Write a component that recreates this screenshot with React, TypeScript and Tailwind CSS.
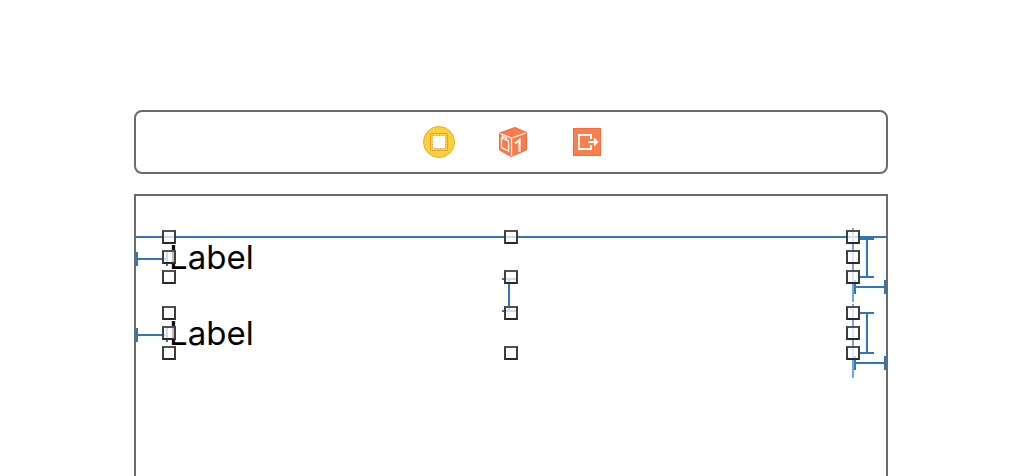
import React from 'react';

interface SpacingProps {
  className?: string;
}

// Horizontal measure: a line with a cap at both ends
function HorizontalSpacing({ className = '' }: SpacingProps) {
  return (
    <div
      className={`absolute flex h-3.5 w-8 items-center border-x-2 border-[#2e78b7] ${className}`}
    >
      <div className="h-0.5 w-full bg-[#2e78b7]" />
    </div>
  );
}

// Vertical measure
function VerticalSpacing({ className = '' }: SpacingProps) {
  return (
    <div
      className={`absolute flex w-3.5 justify-center border-y-2 border-[#2e78b7] ${className}`}
    >
      <div className="h-full w-0.5 bg-[#2e78b7]" />
    </div>
  );
}

const handlePositions = [
  'left-0 top-0',
  'left-0 top-1/2',
  'left-0 top-full',
  'left-1/2 top-0',
  'left-1/2 top-full',
  'left-full top-0',
  'left-full top-1/2',
  'left-full top-full',
];

function ResizeHandles() {
  return (
    <>
      {handlePositions.map((position) => (
        <div
          key={position}
          className={`absolute -mt-[7px] -ml-[7px] size-3.5 border-2 border-x-[#3e3e3e] border-t-[#525252] border-b-[#2a2a2a] bg-white/75 bg-clip-padding ${position}`}
        />
      ))}
    </>
  );
}

interface SelectedLabelProps {
  text: string;
  heightClassName: string;
  spacingBelow?: boolean;
}

function SelectedLabel({ text, heightClassName, spacingBelow = false }: SelectedLabelProps) {
  return (
    <div className="relative h-10">
      <span className="block text-[33px] leading-10 text-black">{text}</span>

      {/* Constraints */}
      <div className="absolute -top-[9px] -right-px h-[74px] w-0.5 bg-[#73a5dd]" />
      <HorizontalSpacing className="top-[15px] -left-[33px]" />
      <HorizontalSpacing className="top-[43px] -right-[33px]" />
      <VerticalSpacing className={`-right-[21px] ${heightClassName}`} />
      {spacingBelow && (
        <VerticalSpacing className="top-[41px] left-1/2 -ml-[9px] h-[34px]" />
      )}

      <ResizeHandles />
    </div>
  );
}

function ViewControllerIcon() {
  return (
    <svg viewBox="0 0 32 32" className="size-8" aria-hidden="true">
      <circle cx="16" cy="16" r="15.5" fill="#fdcf3a" stroke="#e6b02e" />
      <rect x="7.5" y="7.5" width="17" height="17" rx="1" fill="#fdcf3a" stroke="#dda52b" />
      <rect x="9" y="9" width="14" height="14" fill="#fff" />
      <rect
        x="9.5"
        y="9.5"
        width="13"
        height="13"
        fill="none"
        stroke="#dda52b"
        strokeDasharray="2 1"
      />
    </svg>
  );
}

function FirstResponderIcon() {
  return (
    <svg viewBox="0 0 32 32" className="size-8" aria-hidden="true">
      <path
        d="M18 1.5 29.5 6.5V24L14 30.5 2.5 24V7Z"
        fill="#fc7a49"
        stroke="#e86c40"
        strokeLinejoin="round"
      />
      <path d="M3 7.5 14.5 12 29 7M14.5 12V30" fill="none" stroke="#fff" strokeWidth="1.3" />
      <path
        d="M4.500 12 11.500 15V25L4.500 21.500ZM5.500 12V10L9.500 12V14"
        fill="none"
        stroke="#fff"
        strokeWidth="1.3"
      />
      <path d="M18 17.500 22.500 14V26" fill="none" stroke="#fff" strokeWidth="2.2" />
    </svg>
  );
}

function ExitIcon() {
  return (
    <svg viewBox="0 0 32 32" className="size-8" aria-hidden="true">
      <rect x="2.5" y="2.5" width="27" height="27" fill="#fd7d4b" stroke="#ed6e42" />
      <path d="M20 13V9H8V23H20V19" fill="none" stroke="#fff" strokeWidth="2" />
      <path d="M17 16H25" stroke="#fff" strokeWidth="2" />
      <path d="M23 11.5 27.5 16 23 20.5Z" fill="#fff" />
    </svg>
  );
}

const dockItems = [
  { title: 'View Controller', Icon: ViewControllerIcon },
  { title: 'First Responder', Icon: FirstResponderIcon },
  { title: 'Exit', Icon: ExitIcon },
];

export default function App() {
  return (
    <main className="flex min-h-screen flex-col gap-5 bg-white pt-[110px] pr-32 pl-[134px] font-['Inter','Liberation_Sans',sans-serif]">
      {/* Scene dock */}
      <div className="flex h-16 items-center justify-center gap-[42px] rounded-lg border-2 border-[#6b6b6b] pl-1">
        {dockItems.map(({ title, Icon }) => (
          <button key={title} type="button" aria-label={title}>
            <Icon />
          </button>
        ))}
      </div>

      {/* Canvas */}
      <div className="relative grow border-2 border-b-0 border-[#6b6b6b] px-[33px] pt-[41px]">
        {/* Top layout guide */}
        <div className="absolute inset-x-0 top-10 h-0.5 bg-[#2e78b7]" />
        <div className="flex flex-col gap-9">
          <SelectedLabel text="Label" heightClassName="top-px h-10" spacingBelow />
          <SelectedLabel text="Label" heightClassName="-top-px h-[42px]" />
        </div>
      </div>
    </main>
  );
}
